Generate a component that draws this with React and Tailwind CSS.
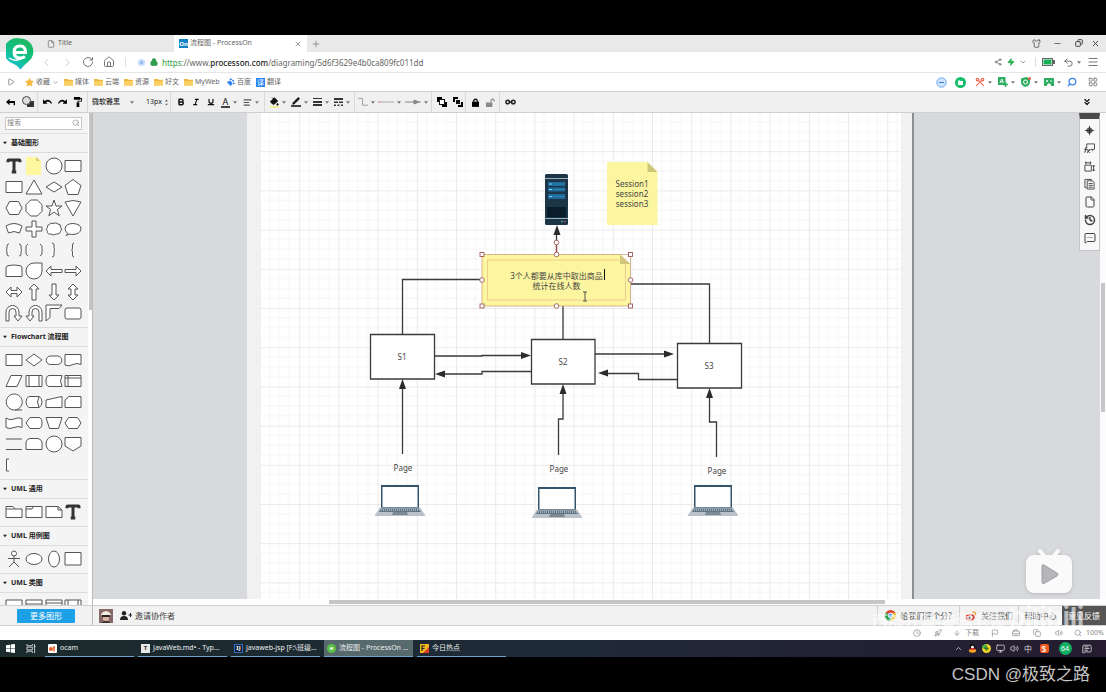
import React from "react";
import {
  RotateCw, Home, Share2, Zap, ChevronDown, ChevronUp, ChevronLeft, ChevronRight, Undo2, Menu, Plus, X, Minus,
  Shirt, File, Lock, Search, Bold, Italic, Underline, AlignLeft, PaintBucket, Pen, Type,
  ChevronsDown, Scissors, LayoutGrid, Play, Star, PawPrint, History,
  MessageSquareMore, Volume2, Monitor, ArrowDown, Flag, Clock, Copy, Rocket, MessageSquareText,
  BriefcaseBusiness,
} from "lucide-react";

const rect = "M1 3.5H17V14.5H1Z";
const circle = "M9 1A8 8 0 1 1 9 17A8 8 0 1 1 9 1Z";
const basic = [
  ["文本", "T"], ["便签", "note"], ["圆形", circle], ["矩形", rect],
  ["矩形", rect], ["三角形", "M9 2L17 16H1Z"], ["菱形", "M1 9L9 4L17 9L9 14Z"], ["五边形", "M9 1.5L17 7.5L14 16.5H4L1 7.5Z"],
  ["六边形", "M1 9L4.5 2.5H13.5L17 9L13.5 15.5H4.5Z"], ["八边形", "M5.7 1H12.3L17 5.7V12.3L12.3 17H5.7L1 12.3V5.7Z"],
  ["五角星", "M9 1L11 7H17L12.3 10.5L14.2 16.8L9 13L3.8 16.8L5.7 10.5L1 7H7Z"], ["扇形", "M1 3Q9 0 17 3L9 17Z"],
  ["弧形", "M1 6Q9 1 17 6L14.5 13Q9 10 3.5 13Z"], ["十字", "M7 1H11V7H17V11H11V17H7V11H1V7H7Z"],
  ["云", "M4 5Q5 2 8 3.5Q11 2 13 4Q16 4 15.5 7Q18 9 15.5 11.5Q15 14.5 11.5 14Q8 16 6 14Q2 14.5 2.5 11.5Q0 9 2.5 7.5Q1.5 5 4 5Z"],
  ["对话", "M4 13.5Q1 12 1 8.5Q2 3.5 9 3.5Q17 4 17 9Q16 14 9 14.5Q7 14.5 5.5 14L2 15.5Z"],
  ["大括号", "M4 3Q2 3 2 5V7Q2 9 1 9Q2 9 2 11V13Q2 15 4 15M14 3Q16 3 16 5V7Q16 9 17 9Q16 9 16 11V13Q16 15 14 15"],
  ["括号", "M3 3Q1 4 1 6V12Q1 14 3 15M15 3Q17 4 17 6V12Q17 14 15 15"],
  ["右括号", "M7 2Q9 2 9 4V7Q9 9 10 9Q9 9 9 11V14Q9 16 7 16"], ["左括号", "M10 2Q8.5 2 8.5 4V7Q8.5 9 7.5 9Q8.5 9 8.5 11V14Q8.5 16 10 16"],
  ["圆顶", "M1 6Q1 3.5 4 3.5Q9 2.5 14 3.5Q17 3.5 17 6V14.5H1Z"], ["水滴", "M9 1H17V9A8 8 0 1 1 9 1Z"],
  ["左箭头", "M1 9L6 4V7.5H17V10.5H6V14Z"], ["右箭头", "M17 9L12 4V7.5H1V10.5H12V14Z"],
  ["左右箭头", "M1 9L6 4V7.5H12V4L17 9L12 14V10.5H6V14Z"], ["上箭头", "M9 1L14 6H11V17H7V6H4Z"],
  ["下箭头", "M9 17L14 12H11V1H7V12H4Z"], ["上下箭头", "M9 1L14 6H11V12H14L9 17L4 12H7V6H4Z"],
  ["掉头", "M1 17V8A6.5 6.5 0 0 1 14 8V12H17L13 17L9 12H11V8A3.5 3.5 0 0 0 4 8V17Z"],
  ["掉头", "M17 17V8A6.5 6.5 0 0 0 4 8V12H1L5 17L9 12H7V8A3.5 3.5 0 0 1 14 8V17Z"],
  ["拐角", "M1 1H17L14 4.5H5V13.5L1 17Z"], ["圆角矩形", "M3 4H15Q17 4 17 6V13Q17 15 15 15H3Q1 15 1 13V6Q1 4 3 4Z"],
];
const flow = [
  ["流程", rect], ["判定", "M9 3L17 9L9 15L1 9Z"], ["终结", "M5.5 5H12.5A4 4 0 0 1 12.5 13.5H5.5A4 4 0 0 1 5.5 5Z"], ["文档", "M1 3.5H17V13.5Q13 11.5 9 13.5Q5 16 1 14Z"],
  ["数据", "M6 3.5H17L12 14.5H1Z"], ["子流程", rect + "M4 3.5V14.5M14 3.5V14.5"], ["外部数据", "M4 3.5H17Q14 9 17 14.5H4Q1 14 1 9Q1 4 4 3.5Z"], ["内部存储", rect + "M4 3.5V14.5M1 6H17"],
  ["队列", "M9 17A8 8 0 1 1 9.5 17H17"], ["数据库", "M4 3.5H14Q17 5 17 9Q17 13 14 14.5H4Q1 13 1 9Q1 5 4 3.5ZM14 3.5Q11 9 14 14.5"], ["人工输入", "M1 7L17 3.5V14.5H1Z"], ["卡片", "M5 3.5H17V14.5H1V7Z"],
  ["条带", "M1 4Q5 7 9 5Q13 3 17 4.5V13.5Q13 11.5 9 13.5Q5 15.5 1 13.5Z"], ["展示", "M5 3.5H14Q17 4 17 9Q17 14 14 14.5H5L1 9Z"], ["人工操作", "M1 3.5H17L13.5 14.5H4.5Z"], ["准备", "M1 9L4.5 3.5H13.5L17 9L13.5 14.5H4.5Z"],
  ["并行", "M1 4H17M1 14.5H17"], ["循环", "M1 14.5V7Q2 3.5 5 3.5H13Q16 4 17 7V14.5Z"], ["圆", circle], ["跨页", "M1 2.5H17V11L9 16L1 11Z"],
  ["注释", "M4 3H1.5V15H4"],
];
const umlCommon = [["包", "M1 3.5H8L10 6H17V14.5H1ZM1 6H10"], ["组合", rect + "M1 6H7L8.5 3.5"], ["注释", "M1 3.5H13L17 7V14.5H1ZM13 3.5V7H17"], ["文本", "T"]];
const umlCase = [["角色", "M9 1A2.5 2.5 0 1 1 9 6A2.5 2.5 0 1 1 9 1ZM9 6V12M3 8.5H15M9 12L4 17M9 12L14 17"], ["用例", "M9 3.5A8 5.5 0 1 1 9 14.5A8 5.5 0 1 1 9 3.5Z"], ["圆", "M9 1A5.5 8 0 1 1 9 17A5.5 8 0 1 1 9 1Z"], ["系统", "M1 2.5H17V15H1Z"]];
const umlClass = [["类", "M1 3H17V17H1Z"], ["类", "M1 3H17V17H1ZM1 7H17"], ["接口", "M1 3H17V17H1ZM1 6H17M1 9H17"], ["组件", "M1 3H17V17H1ZM4 3V17M14 3V17"]];

function Shape({ name, d }) {
  return (
    <button aria-label={name} className="flex h-[18px] w-[18px] items-center justify-center">
      {d === "T" ? (
        <Type size={18} strokeWidth={4} strokeLinecap="butt" className="text-[#333]" />
      ) : d === "note" ? (
        <svg viewBox="0 0 18 18" className="h-[18px] w-[18px]" aria-hidden="true">
          <path d="M1 0H12L16 4V18H1Z" fill="#fdf7a0" /><path d="M11 0L15 4H11Z" fill="#cdc67a" />
        </svg>
      ) : (
        <svg viewBox="0 0 18 18" className="h-[18px] w-[18px]" fill="#fff" stroke="#555" aria-hidden="true"><path d={d} /></svg>
      )}
    </button>
  );
}

function Section({ title, items }) {
  return (
    <section className="border-b border-[#dcdcdc]">
      <h2 className="flex h-[19px] items-center gap-1 border-b border-[#dcdcdc] px-[3px] text-[7px] font-bold text-[#222]">
        <svg viewBox="0 0 6 6" className="h-1 w-1 fill-[#222]" aria-hidden="true"><path d="M0 1H6L3 5Z" /></svg>
        {title}
      </h2>
      <div className="grid w-[82px] grid-cols-4 gap-x-[2px] gap-y-[3px] pt-1 pb-[5px] pl-[5px]">
        {items.map(([n, d], i) => <Shape key={i} name={n} d={d} />)}
      </div>
    </section>
  );
}

const Caret = () => <svg viewBox="0 0 6 4" className="h-[3px] w-1 shrink-0 fill-[#777]" aria-hidden="true"><path d="M0 0H6L3 4Z" /></svg>;

function Tool({ label, w = "w-[16px]", caret, children }) {
  return (
    <button aria-label={label} className={`flex h-5 shrink-0 items-center justify-center gap-[3px] text-[#111] ${w}`}>
      {children}
      {caret && <Caret />}
    </button>
  );
}
const Group = ({ w, children }) => <div className={`flex h-[20px] shrink-0 items-center border-r border-[#d9d9d9] pl-[2px] ${w}`}>{children}</div>;

const Folder = () => (
  <svg viewBox="0 0 10 9" className="h-2 w-[9px]" aria-hidden="true"><path d="M0 1H4L5 2H10V8.500H0Z" fill="#efb73e" /><path d="M0 3.500H10V8.500H0Z" fill="#fbd166" /></svg>
);
const Mark = ({ w, icon, children }) => (
  <a href="#" className={`flex shrink-0 items-center gap-[2px] whitespace-nowrap ${w}`}>{icon || <Folder />}{children}</a>
);

function Toolbar() {
  return (
    <div role="toolbar" className="flex h-[22px] items-center border-y border-[#cfcfcf] bg-[#f0f0f0]">
      <Group w="w-[38px]">
        <Tool label="返回" w="w-[17px]">
          <svg viewBox="0 0 10 8" className="h-2 w-[9px]" aria-hidden="true"><path d="M0 4L4 0.500V3H10V7.500H8.500V5H4V7.500Z" /></svg>
        </Tool>
        <Tool label="图形" w="w-[17px]">
          <svg viewBox="0 0 12 12" className="h-3 w-3" aria-hidden="true"><rect x="5" y="5" width="7" height="6" fill="#333" /><circle cx="4.500" cy="4.500" r="4" fill="#ddd" stroke="#444" /></svg>
        </Tool>
      </Group>
      <Group w="w-[50px]">
        <Tool label="撤销" w="w-[15px]"><svg viewBox="0 0 10 8" className="h-2 w-[9px]" aria-hidden="true"><path d="M0 1V6H5L3.500 4.500Q6 2 9 6L10 5.500Q7 -1 2 3Z" /></svg></Tool>
        <Tool label="重做" w="w-[15px]"><svg viewBox="0 0 10 8" className="h-2 w-[9px]" aria-hidden="true"><path d="M10 1V6H5L6.500 4.500Q4 2 1 6L0 5.500Q3 -1 8 3Z" /></svg></Tool>
        <Tool label="格式刷" w="w-[15px]"><svg viewBox="0 0 10 11" className="h-[10px] w-[9px]" aria-hidden="true"><path d="M1 0H8V1H10V5H6V6H7V11H4V6H5V4H9V2H8V3H1Z" /></svg></Tool>
      </Group>
      <div className="flex h-5 w-[83px] shrink-0 items-center border-r border-[#d9d9d9] pl-1 text-[#222]">
        <div className="flex w-[54px] items-center">
          <select aria-label="字体" className="w-[38px] appearance-none bg-transparent text-[7px] leading-3 font-medium">
            <option>微软雅黑</option>
          </select>
          <Caret />
        </div>
        <input aria-label="字号" defaultValue="13px" className="w-[19px] bg-transparent text-[7px] leading-3" />
        <svg viewBox="0 0 4 8" className="h-[7px] w-[3px] fill-[#666]" aria-hidden="true"><path d="M0 2.500L2 0L4 2.500ZM0 5.500L2 8L4 5.500Z" /></svg>
      </div>
      <Group w="w-[94px]">
        <Tool label="粗体" w="w-[15px]"><Bold size={8} strokeWidth={4.5} /></Tool>
        <Tool label="斜体" w="w-[15px]"><Italic size={8} strokeWidth={3.5} /></Tool>
        <Tool label="下划线" w="w-[15px]"><Underline size={8} strokeWidth={3.5} /></Tool>
        <Tool label="文字颜色" w="w-[22px]" caret>
          <span className="border-b-2 border-[#444] px-[2px] text-[9px] leading-[9px]">A</span>
        </Tool>
        <Tool label="对齐" w="w-[21px]" caret><AlignLeft size={9} strokeWidth={3} className="text-[#555]" /></Tool>
      </Group>
      <Group w="w-[90px]">
        <Tool label="填充" w="w-[21px]" caret>
          <span className="border-b-2 border-[#f2ee9a]"><PaintBucket size={9} fill="#111" strokeWidth={2} /></span>
        </Tool>
        <Tool label="线条颜色" w="w-[22px]" caret>
          <span className="border-b-2 border-[#444] px-px"><Pen size={8} fill="#111" strokeWidth={2} /></span>
        </Tool>
        <Tool label="线宽" w="w-[21px]" caret><svg viewBox="0 0 9 8" className="h-2 w-[9px]" fill="#333" aria-hidden="true"><path d="M0 0H9V1H0ZM0 3H9V5H0ZM0 6H9V8H0Z" /></svg></Tool>
        <Tool label="线型" w="w-[21px]" caret><svg viewBox="0 0 9 8" className="h-2 w-[9px]" fill="#333" aria-hidden="true"><path d="M0 0H9V2H0ZM0 3.500H4V5H0ZM5 3.500H9V5H5ZM0 6.500H2V8H0ZM3.500 6.500H5.500V8H3.500ZM7 6.500H9V8H7Z" /></svg></Tool>
      </Group>
      <Group w="w-[77px]">
        <Tool label="连线" w="w-[19px]" caret><svg viewBox="0 0 11 10" className="h-[10px] w-[10px]" fill="none" stroke="#999" aria-hidden="true"><path d="M0 1H5V8.500H11" /></svg></Tool>
        <Tool label="起点" w="w-[27px]" caret><svg viewBox="0 0 16 4" className="h-1 w-4" stroke="#aaa" aria-hidden="true"><path d="M0 2H16" /><path d="M0 2H3" stroke="#e39a9a" /></svg></Tool>
        <Tool label="终点" w="w-[26px]" caret><svg viewBox="0 0 16 6" className="h-[6px] w-4" fill="#888" stroke="#888" aria-hidden="true"><path d="M0 3H16M9 1L14 3L9 5Z" /></svg></Tool>
      </Group>
      <Group w="w-[34px]">
        {["置于顶层", "置于底层"].map((l, i) => (
          <Tool key={l} label={l} w="w-[16px]">
            <svg viewBox="0 0 10 10" className="h-[10px] w-[10px]" aria-hidden="true">
              <rect x="0" y="0" width="5" height="5" /><rect x="5" y="5" width="5" height="5" />
              <rect x="2.500" y="2.500" width="5" height="5" fill={i ? "#111" : "#fff"} stroke={i ? "#f0f0f0" : "#111"} />
            </svg>
          </Tool>
        ))}
      </Group>
      <Group w="w-[34px]">
        <Tool label="锁定" w="w-[15px]"><svg viewBox="0 0 8 10" className="h-[9px] w-[7px]" aria-hidden="true"><path d="M0 4H8V10H0Z" /><path d="M2 4V2.500Q4 0 6 2.500V4" fill="none" stroke="#111" strokeWidth="1.500" /></svg></Tool>
        <Tool label="解锁" w="w-[15px]"><svg viewBox="0 0 10 10" className="h-[9px] w-[9px]" fill="#888" aria-hidden="true"><path d="M0 5H7V10H0Z" /><path d="M5.500 5V2.500Q7.500 0 9 2.500V4" fill="none" stroke="#888" strokeWidth="1.300" /></svg></Tool>
      </Group>
      <Tool label="链接" w="w-[21px]"><svg viewBox="0 0 12 6" className="h-[6px] w-[11px]" fill="none" stroke="#222" strokeWidth="1.600" aria-hidden="true"><circle cx="3" cy="3" r="2" /><circle cx="9" cy="3" r="2" /><path d="M4 3H8" /></svg></Tool>
      <div className="ml-auto pr-[11px]"><Tool label="展开"><ChevronsDown size={10} strokeWidth={3} /></Tool></div>
    </div>
  );
}

function Browser() {
  return (
    <header className="relative bg-white text-[#666]">
      <svg viewBox="0 0 28 32" className="absolute top-[3px] left-[6px] h-8 w-7" aria-hidden="true">
        <defs><linearGradient id="lg" x1="0.200" y1="1" x2="0.800" y2="0"><stop offset="0" stopColor="#1fc3e8" /><stop offset="0.450" stopColor="#0fc08a" /><stop offset="1" stopColor="#1fb85a" /></linearGradient></defs>
        <path d="M14 0.500A13 13 0 0 1 22 24Q18 27 14.500 31.500Q12 28 8 26A13 13 0 0 1 14 0.500Z" fill="url(#lg)" />
        <path d="M8 14.500H19.500Q19.500 8 14 8Q8 8 8 14.500Q8.500 20 14 20Q17 20 19 18.500" fill="none" stroke="#fff" strokeWidth="3" />
        <path d="M3 20Q9 24 16 20.500" fill="none" stroke="#fff" strokeWidth="1.500" />
      </svg>
      <div className="flex h-[17px] items-center bg-[#e9e9e9] pl-[47px] text-[7px]">
        <button className="flex w-[127px] items-center gap-[3px]"><File size={8} />Title</button>
        <div className="flex h-full w-[133px] items-center bg-white pl-[5px]">
          <button className="flex flex-1 items-center gap-[2px] whitespace-nowrap">
            <span className="flex h-[9px] w-[9px] items-center justify-center bg-[#1681c4] text-[6px] leading-none font-bold text-white">On</span>
            流程图 - ProcessOn
          </button>
          <button aria-label="关闭标签" className="pr-[5px]"><X size={8} /></button>
        </div>
        <button aria-label="新标签" className="pl-1"><Plus size={10} strokeWidth={1.5} /></button>
        <div className="ml-auto flex pr-[6px] text-[#444]">
          <button aria-label="皮肤" className="flex w-[21px] justify-center"><Shirt size={9} /></button>
          <button aria-label="最小化" className="flex w-[21px] justify-center"><Minus size={9} /></button>
          <button aria-label="还原" className="flex w-[21px] justify-center"><Copy size={8} strokeWidth={3} className="-scale-x-100" /></button>
          <button aria-label="关闭" className="flex w-[11px] justify-end"><X size={9} strokeWidth={2.5} /></button>
        </div>
      </div>
      <div className="flex h-[21px] items-center border-b border-[#e6e6e6] pl-[36px]">
        <button aria-label="后退" className="flex w-[21px] justify-center text-[#bbb]"><ChevronLeft size={13} strokeWidth={1.5} /></button>
        <button aria-label="前进" className="flex w-[20px] justify-center text-[#bbb]"><ChevronRight size={13} strokeWidth={1.5} /></button>
        <button aria-label="刷新" className="flex w-[21px] justify-center"><RotateCw size={12} strokeWidth={1.8} /></button>
        <button aria-label="主页" className="flex w-[21px] justify-center"><Home size={12} strokeWidth={1.8} /></button>
        <span className="ml-[6px] h-[10px] w-px bg-[#ddd]" />
        <span className="ml-3 h-[7px] w-[7px] rounded-full border-2 border-[#c8dcfa] bg-[#8ab4f4]" />
        <Lock size={8} strokeWidth={3} fill="#2f9e4b" className="ml-[5px] text-[#2f9e4b]" />
        <div className="ml-[4px] flex flex-1 pt-px text-[8px] leading-3">
          <span className="text-[#2e9c45]">https</span><span>://www.</span><span className="font-medium text-[#222]">processon.com</span><span>/diagraming/5d6f3629e4b0ca809fc011dd</span>
        </div>
        <div className="flex items-center pr-[7px]">
          <button aria-label="分享" className="flex w-[13px] justify-center"><Share2 size={8} /></button>
          <button aria-label="极速" className="flex w-[13px] justify-center text-[#23b14d]"><Zap size={8} fill="#23b14d" /></button>
          <button aria-label="更多" className="flex w-[12px] justify-center"><ChevronDown size={8} /></button>
          <span className="mx-[6px] h-[10px] w-px bg-[#ddd]" />
          <svg viewBox="0 0 13 8" className="h-2 w-[13px]" aria-hidden="true"><rect x="0.500" y="0.500" width="10" height="7" fill="#fff" stroke="#666" /><rect x="1.500" y="1.500" width="8" height="5" fill="#16b057" /><rect x="11" y="2" width="2" height="4" fill="#666" /></svg>
          <button aria-label="恢复" className="ml-2 flex w-[20px] items-center gap-[3px]"><Undo2 size={11} /><Caret /></button>
          <button aria-label="菜单" className="ml-[4px]"><Menu size={12} strokeWidth={1.8} /></button>
        </div>
      </div>
      <nav className="flex h-[18px] items-center pl-[7px] text-[7px]">
        <span className="w-[18px]"><Play size={8} /></span>
        <Mark w="w-[39px]" icon={<Star size={9} fill="#f6b93b" className="text-[#f6b93b]" />}>收藏 <ChevronDown size={7} /></Mark>
        <Mark w="w-[30px]">媒体</Mark><Mark w="w-[30px]">云端</Mark><Mark w="w-[30px]">资源</Mark><Mark w="w-[30px]">好文</Mark>
        <Mark w="w-[43px]">MyWeb</Mark>
        <Mark w="w-[29px]" icon={<PawPrint size={8} fill="#2a7ff0" className="text-[#2a7ff0]" />}>百度</Mark>
        <Mark w="w-[26px]" icon={<span className="flex h-[9px] w-[9px] items-center justify-center bg-[#2a86ee] text-[7px] leading-none text-white">译</span>}>翻译</Mark>
        <div className="ml-auto flex items-center gap-[6px] pr-[8px]">
          <svg viewBox="0 0 11 11" className="mr-[2px] h-[11px] w-[11px]" aria-hidden="true"><circle cx="5.500" cy="5.500" r="4.700" fill="#cfe4ff" stroke="#6ea8ee" /><path d="M3 5.500H8" stroke="#3e7fd8" /></svg>
          <svg viewBox="0 0 11 11" className="mr-[3px] h-[11px] w-[11px]" aria-hidden="true"><circle cx="5.500" cy="5.500" r="5.500" fill="#17bd6a" /><path d="M3 3.500H5L5.500 4H8V8H3Z" fill="#fff" /></svg>
          <button aria-label="截图" className="flex items-center gap-[3px] text-[#ee6a55]"><Scissors size={10} strokeWidth={3} className="rotate-90" /><Caret /></button>
          <button aria-label="翻译" className="flex items-center gap-[3px]">
            <svg viewBox="0 0 10 10" className="h-[10px] w-[10px]" aria-hidden="true"><path d="M0 0H7.500V8H0Z" fill="#2fae62" /><path d="M2 6L3.700 2L5.500 6M2.600 4.800H5" fill="none" stroke="#fff" strokeWidth="0.900" /><path d="M5 7.500H10M7.500 5V10" stroke="#2fae62" strokeWidth="1.500" /></svg>
            <Caret />
          </button>
          <button aria-label="安全" className="flex items-center gap-[3px]">
            <svg viewBox="0 0 10 10" className="h-[10px] w-[10px]" aria-hidden="true"><path d="M0 1.500L5 0L9 1.500V5Q9 8.500 4.500 10Q0 8.500 0 5Z" fill="#2fae62" /><circle cx="4.500" cy="5" r="2" fill="none" stroke="#fff" /><circle cx="8.500" cy="1.500" r="1.500" fill="#ef5a4a" /></svg>
            <Caret />
          </button>
          <button aria-label="游戏" className="flex items-center gap-[3px]">
            <svg viewBox="0 0 10 10" className="h-[10px] w-[10px]" aria-hidden="true"><path d="M0 1H10V9H7.500L6 6.500H4L2.500 9H0Z" fill="#2fae62" /><path d="M2 4H4M3 3V5M6 4H8" stroke="#fff" strokeWidth="0.900" /></svg>
            <Caret />
          </button>
          <Search size={10} strokeWidth={3} className="mr-[5px] -scale-x-100 text-[#3b82e8]" />
          <LayoutGrid size={10} strokeWidth={1.8} />
        </div>
      </nav>
      <Toolbar />
    </header>
  );
}

function Sidebar() {
  return (
    <aside className="flex min-h-0 w-[93px] shrink-0 border-r border-[#bbb] bg-white">
      <div className="h-0 min-h-full w-[88px] overflow-hidden bg-[#f4f4f4]">
        <div className="flex h-[21px] items-center border-b border-[#e0e0e0] px-[5px]">
          <label className="flex h-[13px] w-[77px] items-center border border-[#c8c8c8] bg-white px-px text-[#888]">
            <input aria-label="搜索" placeholder="搜索" className="min-w-0 flex-1 text-[7px] leading-[10px] outline-none placeholder:text-[#888]" />
            <Search size={8} />
          </label>
        </div>
        <Section title="基础图形" items={basic} />
        <Section title="Flowchart 流程图" items={flow} />
        <Section title="UML 通用" items={umlCommon} />
        <Section title="UML 用例图" items={umlCase} />
        <Section title="UML 类图" items={umlClass} />
      </div>
      <div className="w-1 bg-white pl-px"><div className="h-[40%] w-[3px] bg-[#c4c4c4]" /></div>
    </aside>
  );
}

const Laptop = ({ x, y }) => (
  <g transform={`translate(${x} ${y})`}>
    <path d="M6 0H44V24H6Z" fill="#34546b" /><path d="M7.500 2H42.500V22H7.500Z" fill="#fff" />
    <path d="M5 22.500H45L50 30V31H0V30Z" fill="#b9c2ca" /><path d="M6 23.500H44L46 27H4Z" fill="#5f7485" />
    <path d="M6 25H45" stroke="#b9c2ca" strokeDasharray="1 1" strokeWidth="1.500" /><path d="M18 27H32L33 30H17Z" fill="#7d8a94" />
  </g>
);
const Head = ({ x, y, r }) => <path d="M0 0L-3.500 10H3.500Z" transform={`translate(${x} ${y}) rotate(${r})`} fill="#2b2b2b" stroke="none" />;

function Diagram() {
  return (
    <div className="relative h-full w-[640px] shrink-0 overflow-hidden bg-white">
      <svg className="absolute inset-0 h-full w-full" aria-hidden="true">
        <defs>
          <pattern id="grid" x="-1" y="-1" width="39.200" height="39.200" patternUnits="userSpaceOnUse">
            <path d="M9.800 0V39.200M19.600 0V39.200M29.400 0V39.200M0 9.800H39.200M0 19.600H39.200M0 29.400H39.200" stroke="#f5f5f5" fill="none" />
            <path d="M0.500 0V39.200M0 0.500H39.200" stroke="#eaeaea" fill="none" />
          </pattern>
        </defs>
        <rect width="100%" height="100%" fill="url(#grid)" />
      </svg>
      <svg viewBox="261 113 640 486" className="absolute top-0 left-0 h-[486px] w-[640px]" aria-hidden="true">
        <g fill="none" stroke="#3a3a3a" strokeWidth="1.300">
          <path d="M482 279.500H402.500V334M631 284H709.500V343M563 306V339M556.500 254V230" />
          <path d="M434 356H482V355.500H524M531 371.500H482V374H442M595 354H666M677 379.500H638.500V373.500H606" />
          <path d="M402.500 454V386M558.500 455V419H563V392M716.500 457V422H709.500V396" />
          <g fill="#fff"><path d="M370.500 334.500H434.500V379H370.500ZM531.500 339.500H595V384H531.500ZM677.500 343.500H741.500V388H677.500Z" /></g>
        </g>
        <Head x={557} y={225} r={0} /><Head x={531} y={355.5} r={90} /><Head x={435} y={374} r={-90} />
        <Head x={674} y={354} r={90} /><Head x={598} y={373} r={-90} /><Head x={402.5} y={379} r={0} />
        <Head x={563} y={384} r={0} /><Head x={709.5} y={388} r={0} />
        <g>
          <rect x="545" y="174" width="23" height="51" rx="1.500" fill="#1c3647" />
          <path d="M545 178.500H568M545 218.500H568" stroke="#b9cdd8" strokeWidth="0.800" />
          <path d="M548 182H565V186H548ZM548 187.500H565V191.500H548ZM548 194H565V199H548Z" fill="#1d6a9c" />
          <path d="M549 184H552M549 189.500H552M549 196.500H552" stroke="#7fd0f0" /><path d="M553 184H565M553 189.500H565M553 196.500H565" stroke="#3d8cba" strokeWidth="0.700" />
          <rect x="547" y="207" width="19" height="10" fill="#0a1d2b" />
          <circle cx="562" cy="221.500" r="0.700" fill="#8fc" /><circle cx="565" cy="221.500" r="0.700" fill="#f66" />
        </g>
        <path d="M607 162H647.500L657.500 172V225H607Z" fill="#fdf6a0" /><path d="M647.500 162L657.500 172H647.500Z" fill="#cfc778" />
        <path d="M482 254.500H620L630.500 264V306H482Z" fill="#fdf6a0" /><path d="M620 254.500L630.500 264H620Z" fill="#cfc778" />
        <g fill="none" stroke="#d3a37e"><rect x="482" y="254.500" width="148.500" height="51.500" strokeWidth="0.800" /><rect x="487.500" y="260" width="138" height="40" stroke="#e8c48c" strokeWidth="0.800" /></g>
        <path d="M556.500 254V244" stroke="#a04848" strokeWidth="1.200" />
        <g fill="#fff" stroke="#a05a5a" strokeWidth="0.900">
          {[[482, 254.5], [630.5, 254.5], [482, 306], [630.5, 306]].map(([x, y], i) => <rect key={i} x={x - 2} y={y - 2} width="4" height="4" />)}
          {[[556.5, 254.5], [556.5, 306], [482, 280], [630.5, 280], [556.5, 242.5]].map(([x, y], i) => <circle key={i} cx={x} cy={y} r="2.300" />)}
        </g>
        <path d="M583 292H587M583 301H587M585 292V301" stroke="#555" fill="none" />
        <path d="M604.500 269V280" stroke="#111" />
        <Laptop x={375} y={485} /><Laptop x={532} y={487} /><Laptop x={688} y={485} />
      </svg>
      <div className="text-center text-[8px] leading-[10px] text-[#444]">
        <p className="absolute top-[66px] left-[346px] w-[50px]">Session1<br />session2<br />session3</p>
        <p className="absolute top-[158px] left-[221px] w-[149px]">3个人都要从库中取出商品<br />统计在线人数</p>
        <p className="absolute top-[239px] left-[109px] w-[64px]">S1</p>
        <p className="absolute top-[244px] left-[270px] w-[64px]">S2</p>
        <p className="absolute top-[248px] left-[416px] w-[64px]">S3</p>
        <p className="absolute top-[350px] left-[122px] w-[40px]">Page</p>
        <p className="absolute top-[351px] left-[278px] w-[40px]">Page</p>
        <p className="absolute top-[353px] left-[436px] w-[40px]">Page</p>
      </div>
    </div>
  );
}

function Dock() {
  const b = "flex h-[18px] w-full items-center justify-center";
  return (
    <div className="absolute top-0 right-0 w-[21px] border border-t-[6px] border-[#c4c4c4] border-t-[#4a4a4a] bg-[#f8f8f8] pt-[2px] pb-[3px] text-[#444]">
      <button aria-label="导航" className={b}>
        <svg viewBox="0 0 12 12" className="h-[11px] w-[11px]" aria-hidden="true"><path d="M6 0L7.200 4.800L12 6L7.200 7.200L6 12L4.800 7.200L0 6L4.800 4.800Z" fill="#333" /><circle cx="6" cy="6" r="2.800" fill="none" stroke="#333" /></svg>
      </button>
      <button aria-label="图形" className={b}>
        <svg viewBox="0 0 12 11" className="h-[10px] w-[11px]" fill="none" stroke="#444" aria-hidden="true"><path d="M3 4V1H11.500V7H7M9 7V9" /><path d="M0.500 10.500Q1.500 10 2 5.500Q2.500 4.500 3.500 5M0.500 7H3M3.500 7L6.500 10.500M6.500 7L3.500 10.500" strokeWidth="1.300" /></svg>
      </button>
      <button aria-label="度量" className={b}>
        <svg viewBox="0 0 12 12" className="h-[11px] w-[11px]" fill="none" stroke="#444" aria-hidden="true"><path d="M1 4.500H8V11H1ZM1 2H8M2 0.500V3.500M7 0.500V3.500M10.500 4.500V11M9 5.500H12M9 10H12" /></svg>
      </button>
      <button aria-label="页面" className={b}>
        <svg viewBox="0 0 12 12" className="h-3 w-[11px]" fill="none" stroke="#444" aria-hidden="true"><path d="M3 10H1V1H8V2.500M3.500 2.500H9L11 4V11.500H3.500ZM5 5.500H9.500M5 7.500H9.500M5 9.500H9.500" /></svg>
      </button>
      <button aria-label="文件" className={b}><File size={12} strokeWidth={2} /></button>
      <button aria-label="历史" className={b}><History size={12} strokeWidth={3} /></button>
      <button aria-label="评论" className={b}><MessageSquareMore size={12} strokeWidth={2} /></button>
    </div>
  );
}

const Desk = ({ grow }) => <div className={`min-w-0 bg-[#d7d9dd] ${grow}`} />;

function Workspace() {
  return (
    <main className="flex min-w-0 flex-1 flex-col bg-white">
      <div className="flex min-h-0 flex-1">
        <div className="relative flex min-w-0 flex-1">
          <Desk grow="flex-[154]" />
          <div className="w-[14px] bg-[#f1f1f2]" />
          <Diagram />
          <div className="w-[13px] border-r-2 border-[#8c8e93] bg-[#f1f1f2]" />
          <Desk grow="flex-[186]" />
          <Dock />
          <svg viewBox="0 0 48 48" className="absolute right-[27px] bottom-[3px] h-12 w-12 drop-shadow" aria-hidden="true">
            <path d="M15 3L20 9M33 3L28 9" stroke="#fafafa" strokeWidth="4" strokeLinecap="round" />
            <rect x="1" y="7" width="46" height="38" rx="8" fill="#fafafa" />
            <path d="M17 18Q17 16 19 17L32 25Q34 26.500 32 28L19 35.500Q17 36 17 34Z" fill="#b4b6ba" stroke="#8f9195" strokeWidth="0.800" />
          </svg>
        </div>
        <div className="flex w-[6px] flex-col items-center bg-[#fbfbfb]"><div className="flex-[172]" /><div className="w-1 flex-[131] bg-[#c6c6c6]" /><div className="flex-[189]" /></div>
      </div>
      <div className="flex h-[6px] items-center"><div className="flex-[236]" /><div className="h-1 flex-[556] bg-[#c6c6c6]" /><div className="flex-[221]" /></div>
    </main>
  );
}

function Footer() {
  const c = "flex h-full items-center justify-center gap-1 border-l border-[#d0d0d0]";
  return (
    <footer className="relative bg-white text-[8px] text-[#444]">
      <div className="flex h-[21px] items-center border-y border-[#cfcfcf] bg-[#f2f2f2]">
        <div className="flex h-full w-[93px] items-center border-r border-[#bbb] pl-[17px]">
          <button className="h-[14px] w-[58px] rounded-[1px] bg-[#1ea0e6] leading-[14px] text-white">更多图形</button>
        </div>
        <svg viewBox="0 0 14 14" className="ml-[6px] h-[14px] w-[14px]" aria-hidden="true"><rect width="14" height="14" fill="#876a68" /><path d="M2 5Q7 -1 12 5L11 7H3Z" fill="#f2ece4" /><path d="M3 6H11V8H3Z" fill="#2c2224" /><path d="M4 8H10V11Q7 13 4 11Z" fill="#d9b6a2" /><path d="M2 14Q7 10 12 14Z" fill="#3c3032" /></svg>
        <button className="flex items-center gap-[3px] pl-[7px]">
          <svg viewBox="0 0 12 9" className="h-[9px] w-3" fill="#222" aria-hidden="true"><circle cx="4" cy="2.200" r="2.200" /><path d="M0 9Q0 5 4 5Q8 5 8 9ZM8.500 3.500H10V2H11V3.500H12V4.500H11V6H10V4.500H8.500Z" /></svg>
          邀请协作者
        </button>
        <div className="ml-auto flex h-full">
          <button className={c + " w-[82px]"}>
            <svg viewBox="0 0 12 12" className="h-[11px] w-[11px]" aria-hidden="true"><circle cx="6" cy="6" r="6" fill="#f2c32e" /><path d="M6 6L1 2.700A6 6 0 0 1 11.500 3.500H6Z" fill="#dd4b3e" /><path d="M6 6L1 2.700A6 6 0 0 0 5.500 12L8 7Z" fill="#27a35a" /><circle cx="6" cy="6" r="2.500" fill="#4a88e8" stroke="#fff" /></svg>
            给我们评个分?
          </button>
          <button className={c + " w-[59px]"}>
            <svg viewBox="0 0 12 11" className="h-[10px] w-3" aria-hidden="true"><ellipse cx="5" cy="7" rx="5" ry="3.700" fill="#d8332e" /><ellipse cx="5" cy="7" rx="3" ry="2.300" fill="#fff" /><circle cx="4.500" cy="7.200" r="1.500" fill="#222" /><path d="M7.500 1Q11.500 0.500 11 5" fill="none" stroke="#f0932b" strokeWidth="1.300" /></svg>
            关注我们
          </button>
          <button className={c + " w-[44px]"}>帮助中心</button>
          <button className="flex w-[44px] items-center justify-center bg-[#555] text-white">意见反馈</button>
        </div>
      </div>
      <div className="flex h-[14px] items-center justify-end pr-[3px] text-[#888]">
        <span className="flex w-[21px] justify-center"><Clock size={8} /></span>
        <span className="flex w-[21px] justify-center"><Rocket size={8} /></span>
        <button className="flex w-[36px] items-center justify-center gap-1 text-[7px]"><ArrowDown size={8} />下载</button>
        <span className="flex w-[21px] justify-center"><Flag size={8} /></span>
        <span className="flex w-[21px] justify-center"><BriefcaseBusiness size={8} /></span>
        <span className="flex w-[22px] justify-center"><Copy size={8} /></span>
        <span className="flex w-[22px] justify-center"><Volume2 size={8} /></span>
        <span className="flex w-[16px] justify-center"><Search size={8} /></span>
        <span className="w-[17px] text-right text-[7px]">100%</span>
      </div>
      <div className="pointer-events-none absolute right-[22px] bottom-[9px] flex items-end gap-1 font-bold text-white/60">
        <span className="text-[16px] leading-5">西部开源-秦疆老师</span>
        <span className="font-['Inter',sans-serif] text-[26px] leading-7">bilibili</span>
      </div>
    </footer>
  );
}

function Task({ icon, active, children }) {
  return (
    <button className={`flex h-full w-[89px] items-center gap-[3px] overflow-hidden border-b border-[#6fa3cf] pl-[3px] whitespace-nowrap ${active ? "bg-[#56696d]" : ""}`}>
      {icon}
      {children}
    </button>
  );
}

function Taskbar() {
  const sq = "flex h-[9px] w-[9px] shrink-0 items-center justify-center text-[6px] leading-none font-bold";
  return (
    <div className="flex h-[17px] items-center bg-linear-to-r from-[#1b2a2b] via-[#1e2a38] to-[#251c30] text-[7px] text-[#eee]">
      <button aria-label="开始" className="flex w-[21px] justify-center"><svg viewBox="0 0 10 10" className="h-[9px] w-[9px] fill-white" aria-hidden="true"><path d="M0 1.300L4.500 0.700V4.700H0ZM5.200 0.600L10 0V4.700H5.200ZM0 5.300H4.500V9.300L0 8.700ZM5.200 5.300H10V10L5.200 9.400Z" /></svg></button>
      <button aria-label="任务视图" className="flex w-[24px] justify-start pl-[5px]"><svg viewBox="0 0 11 10" className="h-[9px] w-[10px]" fill="none" stroke="#ddd" aria-hidden="true"><path d="M1 0V2H7V0M1 3.500H7V6.500H1ZM1 10V8H7V10M9.500 0V10M8.500 3H10.500" /></svg></button>
      <div className="flex h-full gap-[4px]">
        <Task icon={<svg viewBox="0 0 9 9" className="h-[9px] w-[9px]" aria-hidden="true"><rect width="9" height="9" rx="1" fill="#fff" /><circle cx="3" cy="5" r="2" fill="#e5602b" /><path d="M6 2V7.500" stroke="#e5602b" strokeWidth="1.500" /></svg>}>ocam</Task>
        <Task icon={<span className={sq + " bg-[#e8e8e8] text-[#333]"}>T</span>}>JavaWeb.md• - Typ...</Task>
        <Task icon={<span className={sq + " border border-[#2f6dc0] bg-[#141c30] text-white"}>IJ</span>}>javaweb-jsp [F:\班级...</Task>
        <Task active icon={<span className={sq + " rounded-full bg-[#5cbf45] text-white"}>e</span>}>流程图 - ProcessOn ...</Task>
        <Task icon={<svg viewBox="0 0 9 9" className="h-[9px] w-[9px]" aria-hidden="true"><rect width="9" height="9" fill="#f4b81d" /><path d="M9 3V9H3Z" fill="#e23a2a" /><path d="M2 7V2H5M2 4.500H4.500" fill="none" stroke="#222" strokeWidth="1.200" /></svg>}>今日热点</Task>
      </div>
      <div className="ml-auto flex items-center pr-[10px] text-[#ddd]">
        <span className="flex w-[14px] justify-center"><ChevronUp size={9} /></span>
        <span className="flex w-[14px] justify-center"><svg viewBox="0 0 10 10" className="h-[9px] w-[9px]" aria-hidden="true"><ellipse cx="5" cy="4" rx="3" ry="4" fill="#111" /><ellipse cx="5" cy="7.500" rx="4" ry="2.200" fill="#f5a623" /><circle cx="5" cy="3.500" r="1.500" fill="#fff" /><path d="M2 5H8V6.500H2Z" fill="#e33" /></svg></span>
        <span className="flex w-[14px] justify-center"><svg viewBox="0 0 10 10" className="h-[9px] w-[9px]" aria-hidden="true"><circle cx="5" cy="5" r="5" fill="#f3d32a" /><path d="M5 0A5 5 0 0 0 0 5L5 5Z" fill="#43b649" /><path d="M5 2.500V7.500M2.500 5H7.500" stroke="#33761d" strokeWidth="1.500" /></svg></span>
        <span className="flex w-[14px] justify-center"><Monitor size={9} /></span>
        <span className="flex w-[14px] justify-center"><Volume2 size={9} /></span>
        <span className="flex w-[14px] justify-center text-[8px]">中</span>
        <span className="flex w-[18px] justify-center"><span className="flex h-[9px] w-[9px] items-center justify-center rounded-[2px] bg-[#ee5a1f] text-[8px] leading-none font-bold text-white">S</span></span>
        <span className="flex w-[24px] justify-center"><span className="flex h-[13px] w-[13px] items-center justify-center rounded-full bg-[#0fae62] text-[7px] leading-none text-white">64</span></span>
        <span className="flex w-[19px] justify-center"><MessageSquareText size={10} /></span>
      </div>
    </div>
  );
}

export default function App() {
  return (
    <div className="flex min-h-screen flex-col bg-black pt-[35px] font-['Noto_Sans','Noto_Sans_CJK_SC',sans-serif]">
      <Browser />
      <div className="flex flex-1 items-stretch">
        <Sidebar />
        <Workspace />
      </div>
      <Footer />
      <Taskbar />
      <div className="flex h-[35px] items-center justify-end pr-4 text-[17px] text-[#c4c4c4] font-['Liberation_Sans','Noto_Sans_CJK_SC',sans-serif]">CSDN @极致之路</div>
    </div>
  );
}
